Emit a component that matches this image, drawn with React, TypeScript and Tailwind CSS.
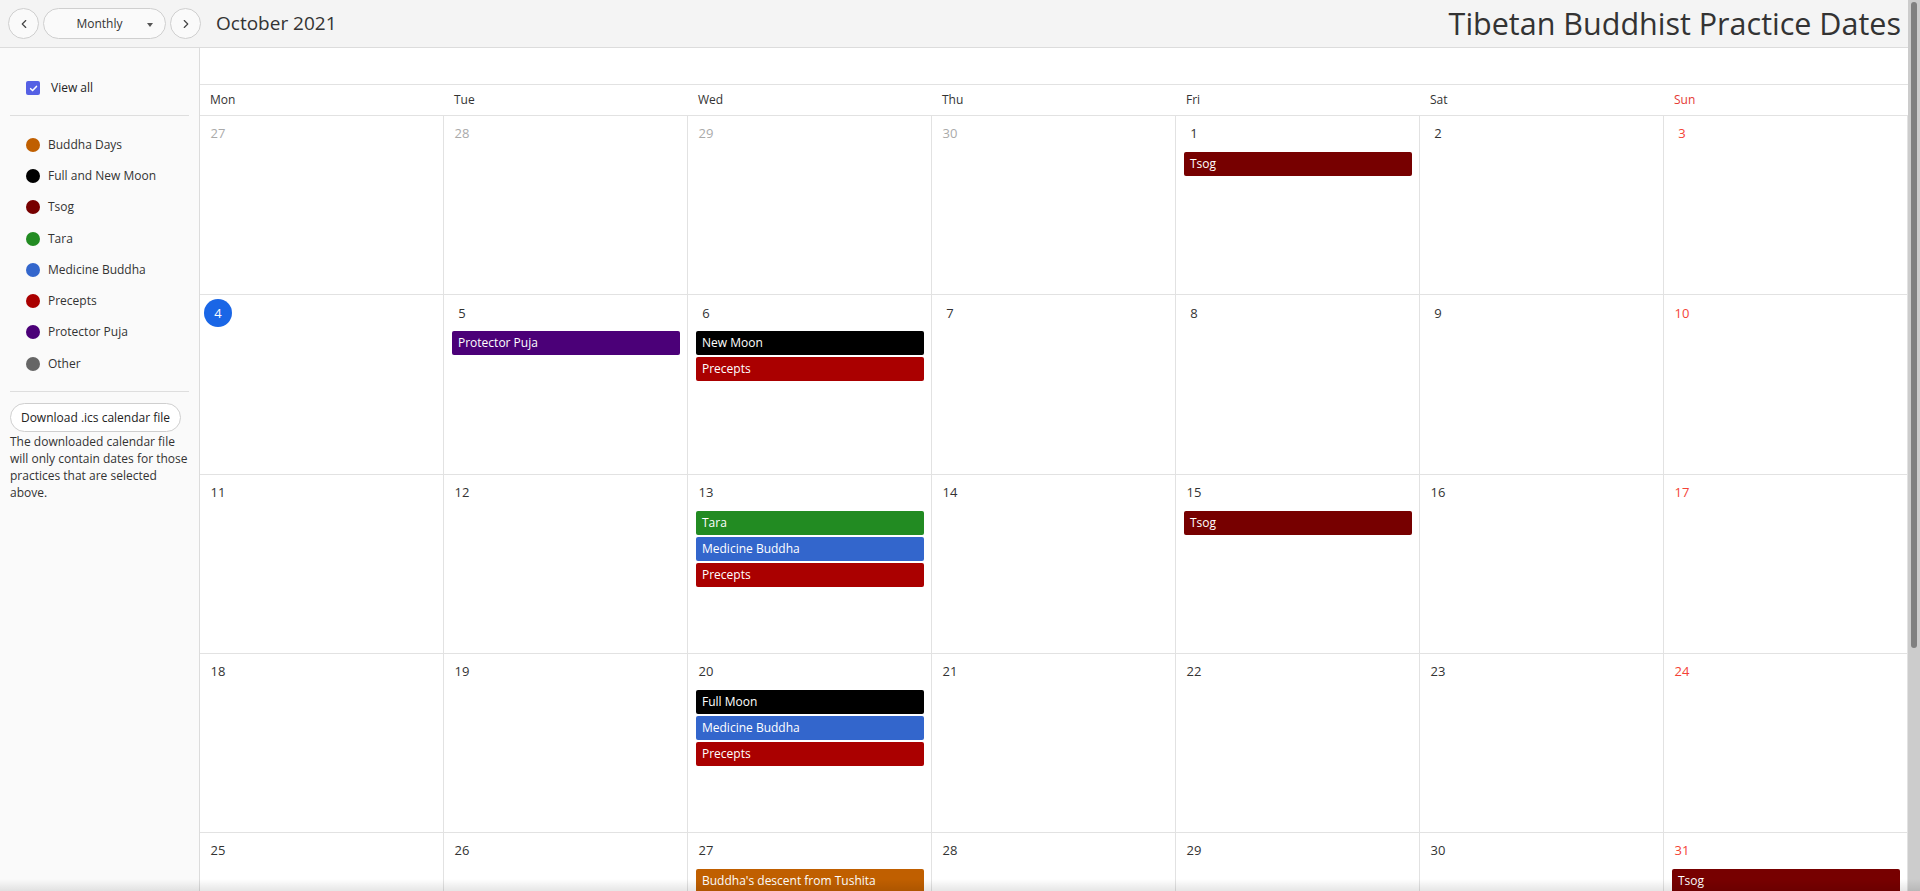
import { ChevronLeft, ChevronRight } from 'lucide-react';

type Practice = { name: string; dot: string };

const practices: Practice[] = [
  { name: 'Buddha Days', dot: 'bg-[#c05f00]' },
  { name: 'Full and New Moon', dot: 'bg-[#000000]' },
  { name: 'Tsog', dot: 'bg-[#770000]' },
  { name: 'Tara', dot: 'bg-[#228b22]' },
  { name: 'Medicine Buddha', dot: 'bg-[#3366cc]' },
  { name: 'Precepts', dot: 'bg-[#aa0000]' },
  { name: 'Protector Puja', dot: 'bg-[#4b0078]' },
  { name: 'Other', dot: 'bg-[#666666]' },
];

const eventColor: Record<string, string> = {
  Tsog: 'bg-[#770000]',
  'Protector Puja': 'bg-[#4b0078]',
  'New Moon': 'bg-[#000000]',
  'Full Moon': 'bg-[#000000]',
  Precepts: 'bg-[#aa0000]',
  Tara: 'bg-[#228b22]',
  'Medicine Buddha': 'bg-[#3366cc]',
  "Buddha's descent from Tushita": 'bg-[#c05f00]',
};

type Day = { n: number; muted?: boolean; today?: boolean; events?: string[] };

const weeks: Day[][] = [
  [
    { n: 27, muted: true },
    { n: 28, muted: true },
    { n: 29, muted: true },
    { n: 30, muted: true },
    { n: 1, events: ['Tsog'] },
    { n: 2 },
    { n: 3 },
  ],
  [
    { n: 4, today: true },
    { n: 5, events: ['Protector Puja'] },
    { n: 6, events: ['New Moon', 'Precepts'] },
    { n: 7 },
    { n: 8 },
    { n: 9 },
    { n: 10 },
  ],
  [
    { n: 11 },
    { n: 12 },
    { n: 13, events: ['Tara', 'Medicine Buddha', 'Precepts'] },
    { n: 14 },
    { n: 15, events: ['Tsog'] },
    { n: 16 },
    { n: 17 },
  ],
  [
    { n: 18 },
    { n: 19 },
    { n: 20, events: ['Full Moon', 'Medicine Buddha', 'Precepts'] },
    { n: 21 },
    { n: 22 },
    { n: 23 },
    { n: 24 },
  ],
  [
    { n: 25 },
    { n: 26 },
    { n: 27, events: ["Buddha's descent from Tushita"] },
    { n: 28 },
    { n: 29 },
    { n: 30 },
    { n: 31, events: ['Tsog'] },
  ],
];

const dayNames = ['Mon', 'Tue', 'Wed', 'Thu', 'Fri', 'Sat', 'Sun'];

function Header() {
  return (
    <header className="flex h-[48px] shrink-0 items-center border-b border-[#dcdcdc] bg-[#f4f4f4] pl-[8px] pr-[7px]">
      <div className="flex items-center gap-[4px]">
        <button className="flex h-[31px] w-[31px] items-center justify-center rounded-full border border-[#cfcfcf] bg-[#fafafa] text-[#444]">
          <ChevronLeft size={14} strokeWidth={2} />
        </button>
        <button className="relative flex h-[31px] w-[123px] items-center justify-center rounded-full border border-[#cfcfcf] bg-[#fafafa] pr-[10px] text-[12px] text-[#333]">
          Monthly
          <span className="absolute right-[12px] top-[14px] h-0 w-0 border-x-[3px] border-t-[4px] border-x-transparent border-t-[#555]" />
        </button>
        <button className="flex h-[31px] w-[31px] items-center justify-center rounded-full border border-[#cfcfcf] bg-[#fafafa] text-[#444]">
          <ChevronRight size={14} strokeWidth={2} />
        </button>
      </div>
      <div className="ml-[15px] text-[19px] text-[#333]">October 2021</div>
      <h1 className="ml-auto text-[30.5px] leading-none text-[#333]">Tibetan Buddhist Practice Dates</h1>
    </header>
  );
}

function Sidebar() {
  return (
    <aside className="flex w-[200px] shrink-0 flex-col border-r border-[#dcdcdc] bg-[#fafafa] px-[10px] pt-[26px]">
      <div className="flex h-[28px] items-center gap-[11px] pl-[16px]">
        <span className="flex h-[14px] w-[14px] items-center justify-center rounded-[2px] bg-[#5560e4]">
          <svg width="9" height="9" viewBox="0 0 10 10" fill="none">
            <path d="M1.8 5.2 4 7.3 8.3 2.7" stroke="white" strokeWidth="1.7" strokeLinecap="round" strokeLinejoin="round" />
          </svg>
        </span>
        <span className="text-[12px] text-[#222]">View all</span>
      </div>
      <div className="mt-[13px] border-t border-[#dedede] pt-[13px] pb-[12px]">
        {practices.map((p) => (
          <div key={p.name} className="flex h-[31.3px] items-center gap-[8px] pl-[16px]">
            <span className={`h-[14px] w-[14px] rounded-full ${p.dot}`} />
            <span className="text-[12px] text-[#333]">{p.name}</span>
          </div>
        ))}
      </div>
      <div className="border-t border-[#dedede] pt-[11px]">
        <button className="h-[29px] w-[171px] rounded-full border border-[#cfcfcf] bg-white text-[12px] text-[#222]">
          Download .ics calendar file
        </button>
        <p className="mt-[1px] text-[12px] leading-[17px] text-[#333]">
          The downloaded calendar file will only contain dates for those practices that are selected above.
        </p>
      </div>
    </aside>
  );
}

function DayCell({ day, sunday }: { day: Day; sunday: boolean }) {
  let numColor = 'text-[#333]';
  if (day.muted) numColor = 'text-[#aaa]';
  else if (sunday) numColor = 'text-[#f44336]';

  return (
    <div className="h-[179.3px] border-r border-b border-[#e2e2e2] px-[4px] pt-[4px]">
      {day.today ? (
        <div className="flex h-[28px] w-[28px] items-center justify-center rounded-full bg-[#1a66e6] text-[13px] text-white">
          {day.n}
        </div>
      ) : (
        <div className={`flex h-[28px] w-[28px] items-center justify-center text-[13px] ${numColor}`}>{day.n}</div>
      )}
      {day.events && (
        <div className="mt-[4px] flex flex-col gap-[2px] pl-[4px] pr-[3px]">
          {day.events.map((e) => (
            <div
              key={e}
              className={`h-[24px] truncate rounded-[2px] px-[6px] text-[12px] leading-[24px] text-white ${eventColor[e]}`}
            >
              {e}
            </div>
          ))}
        </div>
      )}
    </div>
  );
}

function Calendar() {
  return (
    <main className="flex min-w-0 flex-1 flex-col overflow-hidden bg-white">
      <div className="h-[37px] shrink-0 border-b border-[#e2e2e2]" />
      <div className="grid h-[31px] shrink-0 grid-cols-7 border-b border-[#e2e2e2]">
        {dayNames.map((d) => (
          <div
            key={d}
            className={`flex items-center pl-[10px] text-[12px] ${d === 'Sun' ? 'text-[#e53935]' : 'text-[#333]'}`}
          >
            {d}
          </div>
        ))}
      </div>
      <div className="grid grid-cols-7">
        {weeks.map((w, wi) =>
          w.map((day, di) => <DayCell key={`${wi}-${di}`} day={day} sunday={di === 6} />),
        )}
      </div>
    </main>
  );
}

export default function App() {
  return (
    <div className="relative flex h-screen w-full overflow-hidden bg-white font-['Open_Sans',sans-serif]">
      <div className="flex min-w-0 flex-1 flex-col">
        <Header />
        <div className="flex min-h-0 flex-1">
          <Sidebar />
          <Calendar />
        </div>
      </div>
      <div className="flex w-[12px] shrink-0 justify-center bg-[#cccccc] pt-[2px]">
        <div className="h-[646px] w-[6px] rounded-full bg-[#808080]" />
      </div>
      <div className="pointer-events-none absolute inset-x-0 bottom-0 h-[12px] bg-gradient-to-b from-transparent to-black/10" />
    </div>
  );
}
